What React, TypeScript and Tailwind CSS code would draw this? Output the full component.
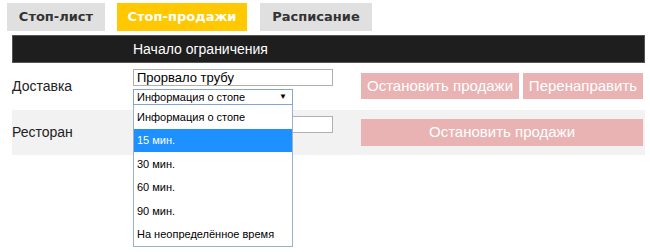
import React from "react";

const options = ["Информация о стопе", "15 мин.", "30 мин.", "60 мин.", "90 мин.", "На неопределённое время"];

export default function App() {
  return (
    <div className="relative w-[650px] h-[252px] bg-white font-['Liberation_Sans',Arial,sans-serif] text-[#222]">
      {/* tabs */}
      <div className="flex gap-[12px] pl-[7px] pt-[3px]">
        <div className="w-[98px] h-[28px] flex items-center justify-center bg-[#e0e0e0] text-[#333] font-['DejaVu_Sans',sans-serif] font-bold text-[13px]">
          Стоп-лист
        </div>
        <div className="w-[130px] h-[28px] flex items-center justify-center bg-[#ffc800] text-white font-['DejaVu_Sans',sans-serif] font-bold text-[13px]">
          Стоп-продажи
        </div>
        <div className="w-[112px] h-[28px] flex items-center justify-center bg-[#e0e0e0] text-[#333] font-['DejaVu_Sans',sans-serif] font-bold text-[13px] ml-[1px]">
          Расписание
        </div>
      </div>

      {/* header bar */}
      <div className="mt-[4px] ml-[12px] mr-[5px] h-[28px] bg-[#1e1e1e] border border-[#555] flex items-center pl-[120px] text-white text-[14px]">
        Начало ограничения
      </div>

      {/* row 1 */}
      <div className="ml-[12px] mr-[5px] h-[47px] flex">
        <div className="w-[121px] flex items-center text-[14px]">Доставка</div>
        <div className="w-[228px] pt-[6px] flex flex-col gap-[3px]">
          <div className="w-[200px] h-[17px] border border-[#b0b0b0] flex items-center px-[3px] text-[13px] text-black">
            Прорвало трубу
          </div>
          <div className="w-[160px] h-[16px] border border-[#7ea6d8] flex items-center justify-between px-[3px] text-[11px] text-black">
            <span>Информация о стопе</span>
            <span className="text-[8px] pr-[2px]">▼</span>
          </div>
        </div>
        <div className="pt-[10px] flex gap-[4px]">
          <div className="w-[158px] h-[26px] bg-[#e9b3b3] text-white text-[15px] flex items-center justify-center whitespace-nowrap">
            Остановить продажи
          </div>
          <div className="w-[120px] h-[26px] bg-[#e9b3b3] text-white text-[15px] flex items-center justify-center whitespace-nowrap">
            Перенаправить
          </div>
        </div>
      </div>

      {/* row 2 */}
      <div className="ml-[12px] mr-[5px] h-[45px] flex bg-[#f2f2f2]">
        <div className="w-[121px] flex items-center text-[14px]">Ресторан</div>
        <div className="w-[228px] pt-[6px]">
          <div className="w-[200px] h-[17px] border border-[#b0b0b0] bg-white" />
        </div>
        <div className="pt-[9px]">
          <div className="w-[282px] h-[27px] bg-[#e9b3b3] text-white text-[15px] flex items-center justify-center">
            Остановить продажи
          </div>
        </div>
      </div>

      {/* open dropdown */}
      <div className="absolute left-[133px] top-[105px] w-[160px] bg-white border border-[#9bb0cc] border-t-0 flex flex-col text-[11px] text-black">
        {options.map((o) => (
          <div
            key={o}
            className={
              o === "15 мин."
                ? "h-[23.5px] flex items-center px-[3px] whitespace-nowrap bg-[#1e90ff] text-white"
                : "h-[23.5px] flex items-center px-[3px] whitespace-nowrap"
            }
          >
            {o}
          </div>
        ))}
      </div>
    </div>
  );
}
